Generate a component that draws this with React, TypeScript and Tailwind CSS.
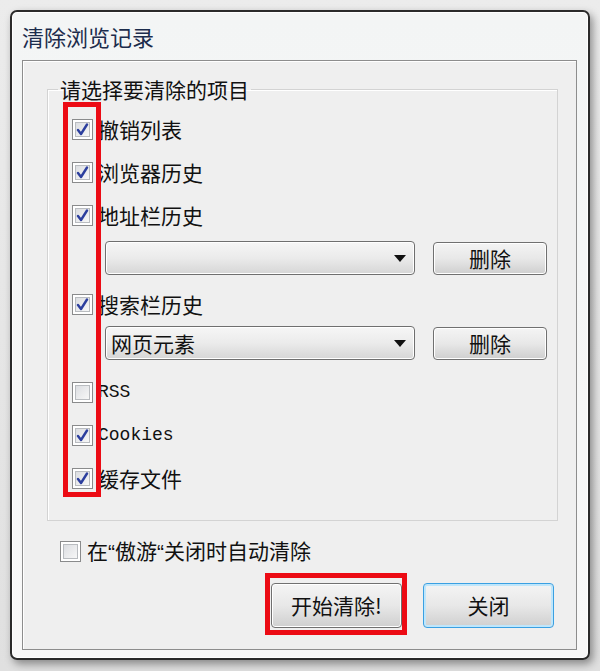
import React from "react";

const cjk = { fontFamily: '"Noto Sans CJK SC", "Noto Sans", sans-serif' };
const mono = { fontFamily: '"Liberation Mono", "Noto Sans CJK SC", monospace' };
const latinQuote = { fontFamily: '"Liberation Sans", sans-serif' };

function CheckBox({ checked }: { checked: boolean }) {
  return (
    <div className="w-[21px] h-[21px] shrink-0 border border-[#8a8b8c] bg-white p-[2px]">
      <div className="w-full h-full border border-[#b9bcc0] bg-gradient-to-br from-[#dcdee2] to-[#f7f7f7] flex items-center justify-center">
        {checked && (
          <svg width="13" height="13" viewBox="0 0 13 13">
            <path d="M2 7 L5 11 L11 1.5" fill="none" stroke="#2c3f9e" strokeWidth="2.4" strokeLinecap="round" strokeLinejoin="round" />
          </svg>
        )}
      </div>
    </div>
  );
}

function Row({ checked, label, latin }: { checked: boolean; label: string; latin?: boolean }) {
  return (
    <div className="h-[43px] flex items-center pl-[14px] gap-[5px]">
      <CheckBox checked={checked} />
      <span
        className={latin ? "text-[18px] text-[#111]" : "text-[21px] leading-none text-[#111]"}
        style={latin ? mono : cjk}
      >
        {label}
      </span>
    </div>
  );
}

function Select({ value }: { value?: string }) {
  return (
    <div className="w-[310px] h-[34px] rounded-[4px] border border-[#6f6f6f] bg-gradient-to-b from-[#f6f6f6] via-[#ebebeb] to-[#d6d6d6] shadow-[inset_0_0_0_1px_#ffffff] flex items-center justify-between pl-[5px] pr-[8px]">
      <span className="text-[21px] text-[#111] leading-none" style={cjk}>
        {value ?? ""}
      </span>
      <svg width="12" height="7" viewBox="0 0 12 7">
        <path d="M0 0 H12 L6 7 Z" fill="#111" />
      </svg>
    </div>
  );
}

function Btn({ label, focus, w, h }: { label: string; focus?: boolean; w: string; h: string }) {
  return (
    <button
      className={
        "rounded-[4px] border bg-gradient-to-b from-[#f4f4f4] via-[#e8e8e8] to-[#cfcfcf] shadow-[inset_0_0_0_1px_#ffffff] flex items-center justify-center text-[21px] text-[#111] leading-none " +
        w +
        " " +
        h +
        (focus ? " border-[#3aa0e2] shadow-[inset_0_0_0_2px_#bfe6fb]" : " border-[#707070]")
      }
      style={cjk}
    >
      {label}
    </button>
  );
}

export default function App() {
  return (
    <div className="w-[600px] h-[671px] bg-gradient-to-b from-[#ececec] to-[#e0e0e0] pt-[10px] pl-[10px]">
      <div className="w-[580px] h-[650px] rounded-[7px] border-2 border-[#2b2b2b] bg-gradient-to-b from-[#f3f5f5] to-[#f8f8f8] shadow-[3px_4px_8px_rgba(0,0,0,0.4),inset_0_0_0_1px_#ffffff] flex flex-col">
        <div className="pl-[10px] pt-[9px] h-[39px] text-[22px] leading-[30px] text-[#1c2c4c]" style={cjk}>
          清除浏览记录
        </div>
        <div className="mt-[9px] ml-[10px] mr-[11px] mb-[8px] flex-1 border border-[#8d8d8d] bg-[#efefef] shadow-[inset_1px_1px_0_#ffffff] flex flex-col">
          <fieldset className="mt-[16px] ml-[24px] mr-[19px] border border-[#d3d3d3] shadow-[inset_1px_1px_0_#ffffff] pl-[10px] pr-[10px] pb-[20px]">
            <legend className="px-[2px] text-[21px] leading-[24px] text-[#111]" style={cjk}>
              请选择要清除的项目
            </legend>
            <div className="relative pt-[7px]">
              <Row checked label="撤销列表" />
              <Row checked label="浏览器历史" />
              <Row checked label="地址栏历史" />
              <div className="mt-[4px] pl-[47px] flex items-center gap-[18px]">
                <Select />
                <Btn label="删除" w="w-[114px]" h="h-[33px]" />
              </div>
              <div className="mt-[8px]">
                <Row checked label="搜索栏历史" />
              </div>
              <div className="pl-[47px] flex items-center gap-[18px]">
                <Select value="网页元素" />
                <Btn label="删除" w="w-[114px]" h="h-[33px]" />
              </div>
              <div className="mt-[11px]">
                <Row checked={false} label="RSS" latin />
                <Row checked label="Cookies" latin />
                <Row checked label="缓存文件" />
              </div>
              <div className="absolute left-[5px] top-[1px] w-[38px] h-[395px] border-[5px] border-[#ec0b14]" />
            </div>
          </fieldset>
          <div className="mt-[15px] h-[30px] pl-[37px] flex items-center gap-[6px]">
            <CheckBox checked={false} />
            <span className="text-[21px] leading-none text-[#111]" style={cjk}>
              在<span style={latinQuote}>“</span>傲游<span style={latinQuote}>“</span>关闭时自动清除
            </span>
          </div>
          <div className="mt-[17px] flex justify-end gap-[21px] pr-[22px]">
            <div className="relative">
              <Btn label="开始清除!" w="w-[131px]" h="h-[45px]" />
              <div className="absolute -left-[6px] -top-[10px] -right-[5px] -bottom-[7px] border-[5px] border-[#ec0b14]" />
            </div>
            <Btn label="关闭" focus w="w-[131px]" h="h-[45px]" />
          </div>
        </div>
      </div>
    </div>
  );
}
